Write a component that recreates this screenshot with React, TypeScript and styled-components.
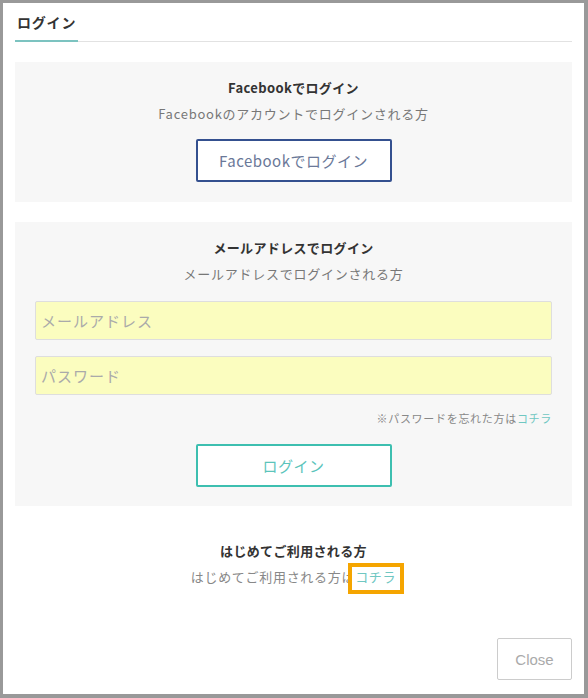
import React from "react";
import styled, { createGlobalStyle } from "styled-components";

const Global = createGlobalStyle`
  html, body { margin: 0; padding: 0; background: #999; }
  * { box-sizing: border-box; }
  body { font-family: "Noto Sans CJK JP", "Noto Sans", sans-serif; }
`;

const Frame = styled.div`
  width: 588px;
  height: 698px;
  border-style: solid;
  border-color: #999999;
  border-width: 3px 4px 4px 3px;
  background: #ffffff;
  padding: 0 12px;
  display: flex;
  flex-direction: column;
`;

const TabBar = styled.div`
  display: flex;
  height: 39px;
  border-bottom: 1px solid #e2e2e2;
`;

const Tab = styled.div`
  display: flex;
  align-items: center;
  padding: 0 0 0 2px;
  width: 63px;
  height: 39px;
  white-space: nowrap;
  font-size: 14px;
  font-weight: 700;
  letter-spacing: 0.8px;
  color: #333;
  border-bottom: 2px solid #7cc3c0;
  margin-bottom: -1px;
`;

const Panel = styled.section<{ $top: number; $h: number }>`
  margin-top: ${(p) => p.$top}px;
  height: ${(p) => p.$h}px;
  background: #f7f7f7;
  display: flex;
  flex-direction: column;
  align-items: center;
  padding: 16px 20px 0;
`;

const Title = styled.div`
  font-size: 13px;
  font-weight: 700;
  color: #333;
  line-height: 20px;
  letter-spacing: 0.35px;
`;

const Sub = styled.div`
  margin-top: 6px;
  font-size: 13px;
  color: #777;
  line-height: 20px;
  letter-spacing: 0.75px;
`;

const OutlineButton = styled.button<{ $color: string; $text: string; $top: number }>`
  margin-top: ${(p) => p.$top}px;
  width: 196px;
  height: 43px;
  background: #fff;
  border: 2px solid ${(p) => p.$color};
  border-radius: 2px;
  color: ${(p) => p.$text};
  font-family: "Noto Sans CJK JP", "Noto Sans", sans-serif;
  font-size: 15px;
  letter-spacing: 0.5px;
  cursor: pointer;
`;

const Input = styled.input<{ $top: number }>`
  margin-top: ${(p) => p.$top}px;
  width: 100%;
  height: 39px;
  background: #fbfdbf;
  border: 1px solid #dedede;
  border-radius: 2px;
  padding: 0 5px;
  font-family: "Noto Sans CJK JP", "Noto Sans", sans-serif;
  font-size: 15px;
  color: #333;
  letter-spacing: 1px;
  &::placeholder { color: #aaa; }
  outline: none;
`;

const Forgot = styled.div`
  align-self: flex-end;
  margin-top: 15px;
  font-size: 11px;
  color: #888;
  line-height: 16px;
  letter-spacing: 0.7px;
`;

const Link = styled.a`
  color: #6fc7c2;
  text-decoration: none;
`;

const Bottom = styled.div`
  margin-top: 35px;
  display: flex;
  flex-direction: column;
  align-items: center;
`;

const BottomSub = styled.div`
  margin-top: 6px;
  font-size: 13px;
  color: #888;
  line-height: 20px;
  letter-spacing: 0.7px;
`;

const Highlighted = styled(Link)`
  position: relative;
  &::after {
    content: "";
    position: absolute;
    left: -7px;
    right: -8px;
    top: -4px;
    bottom: -8px;
    border: 4px solid #f5a500;
    background: transparent;
  }
  &::before {
    content: "";
    position: absolute;
    left: -3px;
    top: 0;
    bottom: -4px;
    width: 3px;
    background: #fff;
  }
`;

const Footer = styled.div`
  margin-top: auto;
  margin-bottom: 14px;
  display: flex;
  justify-content: flex-end;
`;

const CloseButton = styled.button`
  width: 75px;
  height: 42px;
  background: #fff;
  border: 1px solid #cccccc;
  border-radius: 2px;
  color: #aaa;
  font-family: "Liberation Sans", Arial, sans-serif;
  font-size: 15px;
  cursor: pointer;
`;

export default function App() {
  return (
    <>
      <Global />
      <Frame>
        <TabBar>
          <Tab>ログイン</Tab>
        </TabBar>
        <Panel $top={20} $h={140}>
          <Title>Facebookでログイン</Title>
          <Sub>Facebookのアカウントでログインされる方</Sub>
          <OutlineButton $color="#34508f" $text="#6a7898" $top={15}>
            Facebookでログイン
          </OutlineButton>
        </Panel>
        <Panel $top={20} $h={284}>
          <Title>メールアドレスでログイン</Title>
          <Sub>メールアドレスでログインされる方</Sub>
          <Input $top={17} placeholder="メールアドレス" />
          <Input $top={16} type="password" placeholder="パスワード" />
          <Forgot>
            ※パスワードを忘れた方は<Link href="#">コチラ</Link>
          </Forgot>
          <OutlineButton $color="#3dbfb0" $text="#5cc4bb" $top={18}>
            ログイン
          </OutlineButton>
        </Panel>
        <Bottom>
          <Title>はじめてご利用される方</Title>
          <BottomSub>
            はじめてご利用される方は<Highlighted href="#">コチラ</Highlighted>
          </BottomSub>
        </Bottom>
        <Footer>
          <CloseButton>Close</CloseButton>
        </Footer>
      </Frame>
    </>
  );
}
